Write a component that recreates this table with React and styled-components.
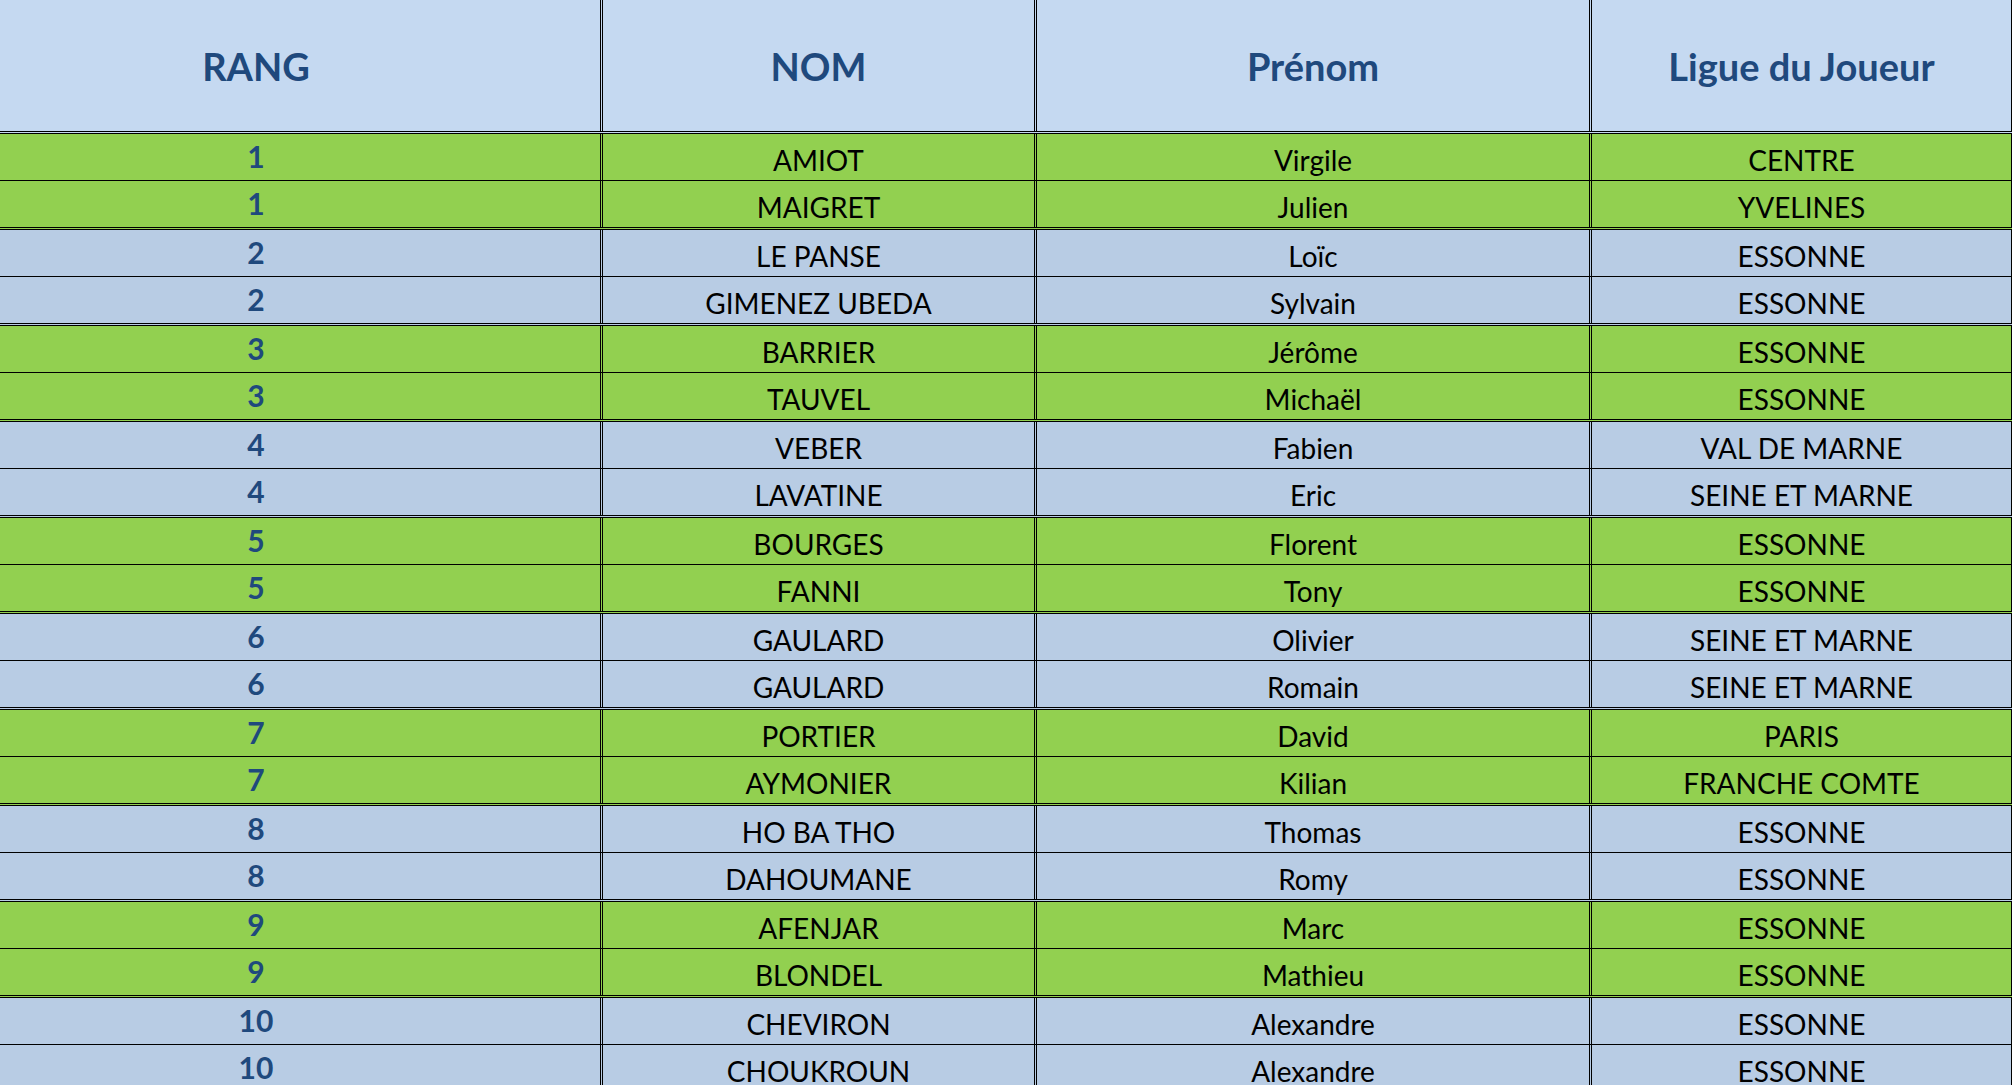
import React from "react";
import styled, { createGlobalStyle } from "styled-components";

const players = [
  ["1", "AMIOT", "Virgile", "CENTRE"],
  ["1", "MAIGRET", "Julien", "YVELINES"],
  ["2", "LE PANSE", "Loïc", "ESSONNE"],
  ["2", "GIMENEZ UBEDA", "Sylvain", "ESSONNE"],
  ["3", "BARRIER", "Jérôme", "ESSONNE"],
  ["3", "TAUVEL", "Michaël", "ESSONNE"],
  ["4", "VEBER", "Fabien", "VAL DE MARNE"],
  ["4", "LAVATINE", "Eric", "SEINE ET MARNE"],
  ["5", "BOURGES", "Florent", "ESSONNE"],
  ["5", "FANNI", "Tony", "ESSONNE"],
  ["6", "GAULARD", "Olivier", "SEINE ET MARNE"],
  ["6", "GAULARD", "Romain", "SEINE ET MARNE"],
  ["7", "PORTIER", "David", "PARIS"],
  ["7", "AYMONIER", "Kilian", "FRANCHE COMTE"],
  ["8", "HO BA THO", "Thomas", "ESSONNE"],
  ["8", "DAHOUMANE", "Romy", "ESSONNE"],
  ["9", "AFENJAR", "Marc", "ESSONNE"],
  ["9", "BLONDEL", "Mathieu", "ESSONNE"],
  ["10", "CHEVIRON", "Alexandre", "ESSONNE"],
  ["10", "CHOUKROUN", "Alexandre", "ESSONNE"]
];

const GlobalStyle = createGlobalStyle`
  html, body {
    margin: 0;
    padding: 0;
    background: #ffffff;
    overflow: hidden;
  }
`;

export default function App() {
  return (
    <>
      <GlobalStyle />
      <Sheet>
        <Row $head>
          <HeadCell $first>RANG</HeadCell>
          <HeadCell>NOM</HeadCell>
          <HeadCell>Prénom</HeadCell>
          <HeadCell $last>Ligue du Joueur</HeadCell>
        </Row>
        {players.map((p, i) => {
          const green = Number(p[0]) % 2 === 1;
          const pairEnd = i % 2 === 1;
          return (
            <Row key={i} $green={green} $pairEnd={pairEnd}>
              <RankCell $first>{p[0]}</RankCell>
              <Cell>{p[1]}</Cell>
              <Cell>{p[2]}</Cell>
              <Cell $last>{p[3]}</Cell>
            </Row>
          );
        })}
      </Sheet>
    </>
  );
}

const Sheet = styled.div`
  width: 2012px;
  display: flex;
  flex-direction: column;
  font-family: Lato, "Open Sans", sans-serif;
`;

const Row = styled.div`
  display: grid;
  grid-template-columns: 603px 434px 555px 420px;
  box-sizing: border-box;
  height: ${p => (p.$head ? "134px" : p.$pairEnd ? "49px" : "47px")};
  background: ${p => (p.$head ? "#c5d9f1" : p.$green ? "#92d050" : "#b8cce4")};
  border-bottom: ${p =>
    p.$head || p.$pairEnd ? "3px double #000000" : "1px solid #000000"};
`;

const Cell = styled.div`
  display: flex;
  justify-content: center;
  align-items: flex-end;
  box-sizing: border-box;
  padding-bottom: 6px;
  padding-right: ${p => (p.$first ? "88px" : "0")};
  border-right: ${p => (p.$last ? "1px solid #000000" : "3px double #000000")};
  font-size: 28px;
  line-height: 1;
  color: #000000;
  white-space: nowrap;
`;

const RankCell = styled(Cell)`
  font-size: 30px;
  font-weight: 700;
  color: #1f497d;
  padding-bottom: 9px;
`;

const HeadCell = styled(Cell)`
  align-items: center;
  padding-bottom: 0;
  padding-top: 0;
  font-size: 38px;
  font-weight: 700;
  color: #1f497d;
`;
